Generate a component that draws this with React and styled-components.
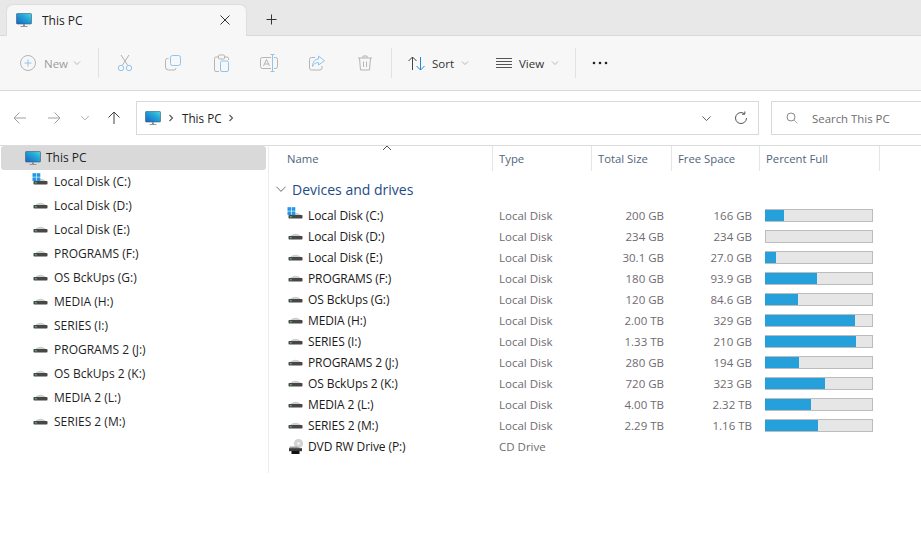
import React from 'react';
import styled, { createGlobalStyle } from 'styled-components';

const Global = createGlobalStyle`
  html, body { margin: 0; padding: 0; background: #fff; overflow: hidden; }
  body { font-family: "Open Sans", "Noto Sans", "Liberation Sans", sans-serif; font-size: 12px; color: #1a1a1a; }
  * { box-sizing: border-box; }
`;

const Window = styled.div`
  width: 921px; height: 540px; display: flex; flex-direction: column; overflow: hidden; background: #fff;
`;
const TabStrip = styled.div`
  height: 36px; flex: none; background: #e8e8e8; border-bottom: 1px solid #d9d9d9; display: flex; padding: 4px 0 0 6px;
`;
const Tab = styled.div`
  width: 241px; height: 32px; background: #f7f7f7; border: 1px solid #dedede; border-bottom: none; border-radius: 7px 7px 0 0;
  display: flex; align-items: center; padding: 0 16px 1px 9px; font-size: 12px; color: #222;
  span { margin-left: 10px; flex: 1; }
`;
const NewTab = styled.div`
  width: 48px; display: flex; align-items: center; justify-content: center;
`;
const Toolbar = styled.div`
  height: 55px; flex: none; background: #f7f7f7; border-bottom: 1px solid #d9d9d9; display: flex; align-items: center; padding: 0 0 0 12px; color: #9a9a9a;
`;
const ToolBtn = styled.div`
  width: ${p => p.$w}px; height: 30px; display: flex; align-items: center; flex: none; gap: ${p => p.$gap || 0}px;
  justify-content: ${p => p.$pad ? 'flex-start' : 'center'}; padding-left: ${p => p.$pad || 0}px;
  color: ${p => p.$dark ? '#333' : '#9c9c9c'}; font-size: 11.5px;
`;
const ToolSep = styled.div`
  width: 1px; height: 30px; background: #e2e2e2; flex: none; margin-left: ${p => p.$l || 0}px; margin-right: ${p => p.$r || 0}px;
`;
const NavRow = styled.div`
  height: 55px; flex: none; display: flex; align-items: center; border-bottom: 1px solid #dcdcdc;
`;
const NavBtns = styled.div`
  width: 136px; flex: none; display: flex; align-items: center; padding-left: 9px;
`;
const NavBtn = styled.div`
  width: ${p => p.$w}px; height: 24px; flex: none; display: flex; align-items: center; justify-content: center;
`;
const Address = styled.div`
  width: 623px; height: 34px; flex: none; border: 1px solid #d9d9d9; display: flex; align-items: center; padding: 0 10px 0 8px; font-size: 11.7px; color: #222;
`;
const CaretSlot = styled.span`margin-left: 7px; line-height: 0;`;
const Crumb = styled.span`margin: 0 6px 0 8px;`;
const Spacer = styled.div`flex: 1;`;
const DropSlot = styled.span`margin-right: 22px; line-height: 0;`;
const Search = styled.div`
  width: 160px; height: 34px; flex: none; margin-left: 12px; border: 1px solid #d9d9d9; border-right: none; display: flex; align-items: center; padding-left: 14px; gap: 14px; color: #6e6e6e; font-size: 11.4px;
`;
const Body = styled.div`display: flex; flex: 1; min-height: 0;`;
const Side = styled.div`
  width: 269px; height: 327px; flex: none; border-right: 1px solid #ececec; padding: 0 0 0 1px;
`;
const SideRow = styled.div`
  width: 265px; height: 24px; display: flex; align-items: center; font-size: 12px; color: #1f1f1f; border-radius: 3px;
  padding-left: ${p => p.$sel ? 24 : 32}px; padding-bottom: 1px; background: ${p => p.$sel ? '#d9d9d9' : 'transparent'};
  span { margin-left: ${p => p.$sel ? 5 : 6}px; }
`;
const Main = styled.div`flex: 1; min-width: 0; position: relative;`;
const SortMark = styled.div`position: absolute; left: 113px; top: -1px; line-height: 0;`;
const Columns = '223px 99px 80px 88px 121px';
const Head = styled.div`
  display: grid; grid-template-columns: ${Columns}; height: 25px; width: 611px;
`;
const HeadCell = styled.div`
  color: #51647c; font-size: 11.3px; display: flex; align-items: center; height: 25px; padding-left: ${p => p.$first ? 18 : 6}px;
  border-left: ${p => p.$first ? 'none' : '1px solid #e5e5e5'};
  border-right: ${p => p.$last ? '1px solid #e5e5e5' : 'none'};
`;
const Group = styled.div`
  height: 24px; margin-top: 6px; margin-bottom: 4px; display: flex; align-items: center; padding-left: 6px; gap: 5px; color: #1c4c86; font-size: 14px;
`;
const Row = styled.div`
  display: grid; grid-template-columns: ${Columns}; height: 21px; align-items: center; width: 611px; font-size: 11.5px;
`;
const NameCell = styled.div`
  display: flex; align-items: center; padding-left: 19px; gap: 5px; color: #1a1a1a; font-size: 12px; letter-spacing: -0.1px;
`;
const TypeCell = styled.div`padding-left: 7px; color: #6f6a72;`;
const SizeCell = styled.div`text-align: right; padding-right: 7px; color: #6f6a72;`;
const BarCell = styled.div`padding-left: 6px;`;
const Bar = styled.div`
  width: 108px; height: 13px; background: #e6e6e6; border: 1px solid #bcbcbc;
`;
const Fill = styled.div`height: 100%; background: #26a0da; margin-left: -1px;`;

const Monitor = () => (
  <svg width="16" height="16" viewBox="0 0 16 16" style={{ flex: 'none' }}>
    <defs>
      <linearGradient id="scr" x1="0" y1="1" x2="1" y2="0">
        <stop offset="0" stopColor="#1b62c4" />
        <stop offset="0.6" stopColor="#23a6d6" />
        <stop offset="1" stopColor="#4fd3dd" />
      </linearGradient>
    </defs>
    <rect x="0.5" y="1.5" width="15" height="10.5" rx="0.8" fill="url(#scr)" stroke="#3a5a70" strokeWidth="0.6" />
    <rect x="7" y="12.2" width="2" height="1.8" fill="#8a8f94" />
    <rect x="4.5" y="14" width="7" height="0.9" fill="#8a8f94" />
  </svg>
);
const Disk = ({ win }) => (
  <svg width="15" height="15" viewBox="0 0 15 15" style={{ flex: 'none', overflow: 'visible' }}>
    <path d="M2 7 Q7.500 2.600 13 7 L14.200 8 H0.800 Z" fill="#cfcfcf" />
    <rect x="0.500" y="7" width="14" height="3.600" rx="0.800" fill="#474747" />
    <rect x="2" y="8.300" width="1.700" height="1" fill="#5fe05f" />
    {win && <g fill="#2197e6"><rect x="-0.500" y="-0.800" width="3.600" height="3.600" /><rect x="3.700" y="-0.800" width="3.600" height="3.600" /><rect x="-0.500" y="3.400" width="3.600" height="3.600" /><rect x="3.700" y="3.400" width="3.600" height="3.600" /></g>}
  </svg>
);
const Dvd = () => (
  <svg width="15" height="16" viewBox="0 0 15 16" style={{ flex: 'none' }}>
    <circle cx="10.500" cy="4.500" r="4.300" fill="#d4d4d4" stroke="#b5b5b5" strokeWidth="0.400" />
    <circle cx="10.500" cy="4.500" r="1.200" fill="#f5f5f5" />
    <path d="M2 7.500 H9 L13 9.500 H1 Z" fill="#9a9a9a" />
    <rect x="1" y="9.200" width="13" height="3" fill="#3a3a3a" />
    <rect x="3.500" y="12" width="8" height="3" fill="#111" />
  </svg>
);
const Chevron = ({ c = '#9a9a9a', w = 8 }) => (
  <svg width={w} height={w} viewBox="0 0 8 8" style={{ flex: 'none' }}><path d="M1 2.500 L4 5.500 L7 2.500" fill="none" stroke={c} strokeWidth="0.700" /></svg>
);
const Caret = () => (
  <svg width="6" height="8" viewBox="0 0 6 8"><path d="M1.500 1 L4.500 4 L1.500 7" fill="none" stroke="#555" strokeWidth="1.100" /></svg>
);
const I = ({ w = 18, h = 18, children }) => (
  <svg width={w} height={h} viewBox={`0 0 ${w} ${h}`} fill="none" strokeWidth="1" style={{ flex: 'none' }}>{children}</svg>
);

const drives = [
  ['Local Disk (C:)', '200 GB', '166 GB', 19, true],
  ['Local Disk (D:)', '234 GB', '234 GB', 0],
  ['Local Disk (E:)', '30.1 GB', '27.0 GB', 11],
  ['PROGRAMS (F:)', '180 GB', '93.9 GB', 52],
  ['OS BckUps (G:)', '120 GB', '84.6 GB', 33],
  ['MEDIA (H:)', '2.00 TB', '329 GB', 90],
  ['SERIES (I:)', '1.33 TB', '210 GB', 91],
  ['PROGRAMS 2 (J:)', '280 GB', '194 GB', 34],
  ['OS BckUps 2 (K:)', '720 GB', '323 GB', 60],
  ['MEDIA 2 (L:)', '4.00 TB', '2.32 TB', 46],
  ['SERIES 2 (M:)', '2.29 TB', '1.16 TB', 53],
];

export default function App() {
  return (
    <Window>
      <Global />
      <TabStrip>
        <Tab>
          <Monitor />
          <span>This PC</span>
          <I w={10} h={10}><path d="M0.500 0.500 L9.500 9.500 M9.500 0.500 L0.500 9.500" stroke="#333" /></I>
        </Tab>
        <NewTab><I w={11} h={11}><path d="M5.500 0.500 V10.500 M0.500 5.500 H10.500" stroke="#333" /></I></NewTab>
      </TabStrip>
      <Toolbar>
        <ToolBtn $w={86} $gap={5} $pad={7}>
          <I w={18} h={18}><circle cx="9" cy="9" r="7.500" stroke="#b5b5b5" /><path d="M9 5.500 V12.500 M5.500 9 H12.500" stroke="#8fc4ee" /></I>
          <span style={{ marginLeft: 2 }}>New</span>
          <Chevron />
        </ToolBtn>
        <ToolSep $r={2} />
        <ToolBtn $w={48}>
          <I w={16} h={18}><path d="M4 1 L10.500 11 M12 1 L5.500 11" stroke="#b0b0b0" /><circle cx="4" cy="14" r="2.700" stroke="#8fc4ee" /><circle cx="12" cy="14" r="2.700" stroke="#8fc4ee" /></I>
        </ToolBtn>
        <ToolBtn $w={48}>
          <I w={16} h={16}><rect x="5.500" y="0.500" width="10" height="10" rx="2" stroke="#8fc4ee" /><path d="M3.500 3.500 H2.500 A2 2 0 0 0 0.500 5.500 V12 A3 3 0 0 0 3.500 15 H9 A2 2 0 0 0 11 13" stroke="#b5b5b5" /></I>
        </ToolBtn>
        <ToolBtn $w={48}>
          <I w={15} h={18}><path d="M4.500 3 H2 A1.500 1.500 0 0 0 0.500 4.500 V16 A1.500 1.500 0 0 0 2 17.500 H5 M10.500 3 H13 A1.500 1.500 0 0 1 14.500 4.500 V6" stroke="#b5b5b5" /><rect x="4.500" y="1" width="6" height="4" rx="1" stroke="#b5b5b5" /><rect x="6.500" y="7" width="8" height="10.500" rx="1.500" stroke="#8fc4ee" /></I>
        </ToolBtn>
        <ToolBtn $w={48}>
          <I w={18} h={18}><path d="M11 3.500 H2.500 A2 2 0 0 0 0.500 5.500 V12.500 A2 2 0 0 0 2.500 14.500 H11 M14 3.500 H15.500 A2 2 0 0 1 17.500 5.500 V12.500 A2 2 0 0 1 15.500 14.500 H14" stroke="#b5b5b5" /><path d="M12.500 1 V17 M10.500 0.500 H14.500 M10.500 17.500 H14.500" stroke="#8fc4ee" /><path d="M3.500 12 L6.500 5.500 L9.500 12 M4.500 10 H8.500" stroke="#b5b5b5" /></I>
        </ToolBtn>
        <ToolBtn $w={48}>
          <I w={16} h={16}><path d="M6 2.500 H2.500 A2 2 0 0 0 0.500 4.500 V13 A2 2 0 0 0 2.500 15 H11 A2 2 0 0 0 13 13 V11" stroke="#b5b5b5" /><path d="M9.500 1 L15.500 5.800 L9.500 10 V7.500 C6.500 7.500 4.500 9 3.500 11.500 C3.500 7 6 4 9.500 4 Z" stroke="#8fc4ee" /></I>
        </ToolBtn>
        <ToolBtn $w={48}>
          <I w={14} h={16}><path d="M0 3 H14 M5 3 V1 H9 V3 M1.500 3 L2.500 15 H11.500 L12.500 3 M5.500 6.500 V12 M8.500 6.500 V12" stroke="#b5b5b5" /></I>
        </ToolBtn>
        <ToolSep $l={2} />
        <ToolBtn $w={88} $gap={7} $pad={16} $dark>
          <I w={17} h={15}><path d="M4.500 14 V1 M0.500 5 L4.500 1 L8.500 5" stroke="#444" /><path d="M12.500 1 V14 M8.500 10 L12.500 14 L16.500 10" stroke="#1e88d8" /></I>
          <span>Sort</span>
          <Chevron />
        </ToolBtn>
        <ToolBtn $w={95} $gap={7} $pad={16} $dark>
          <I w={16} h={12}><path d="M0 1.500 H16 M0 4.500 H16 M0 7.500 H16 M0 10.500 H16" stroke="#555" /></I>
          <span>View</span>
          <Chevron />
        </ToolBtn>
        <ToolSep />
        <ToolBtn $w={48}>
          <I w={16} h={4}><circle cx="2" cy="2" r="1.300" fill="#222" /><circle cx="8" cy="2" r="1.300" fill="#222" /><circle cx="14" cy="2" r="1.300" fill="#222" /></I>
        </ToolBtn>
      </Toolbar>
      <NavRow>
        <NavBtns>
          <NavBtn $w={22}><I w={14} h={14}><path d="M13 7 H1 M6.500 1.500 L1 7 L6.500 12.500" stroke="#a0a0a0" /></I></NavBtn>
          <NavBtn $w={46}><I w={14} h={14}><path d="M1 7 H13 M7.500 1.500 L13 7 L7.500 12.500" stroke="#a0a0a0" /></I></NavBtn>
          <NavBtn $w={16}><Chevron w={10} c="#a0a0a0" /></NavBtn>
          <NavBtn $w={42}><I w={14} h={14}><path d="M7 13 V1 M1.500 6.500 L7 1 L12.500 6.500" stroke="#444" /></I></NavBtn>
        </NavBtns>
        <Address>
          <Monitor />
          <CaretSlot><Caret /></CaretSlot>
          <Crumb>This PC</Crumb>
          <Caret />
          <Spacer />
          <DropSlot><Chevron w={11} c="#555" /></DropSlot>
          <I w={14} h={14}><path d="M12.500 7 A5.500 5.500 0 1 1 10.500 2.800 M10.800 0.500 V3.200 H8" stroke="#555" /></I>
        </Address>
        <Search>
          <I w={12} h={12}><circle cx="5" cy="5" r="4" stroke="#8a8a8a" /><path d="M8 8 L11.500 11.500" stroke="#8fb8d8" /></I>
          <span>Search This PC</span>
        </Search>
      </NavRow>
      <Body>
        <Side>
          <SideRow $sel><Monitor /><span>This PC</span></SideRow>
          {drives.map(d => (
            <SideRow key={d[0]}><Disk win={d[4]} /><span>{d[0]}</span></SideRow>
          ))}
        </Side>
        <Main>
          <SortMark><svg width="10" height="6" viewBox="0 0 10 6"><path d="M1 5 L5 1 L9 5" fill="none" stroke="#555" /></svg></SortMark>
          <Head>
            <HeadCell $first>Name</HeadCell>
            <HeadCell>Type</HeadCell>
            <HeadCell>Total Size</HeadCell>
            <HeadCell>Free Space</HeadCell>
            <HeadCell $last>Percent Full</HeadCell>
          </Head>
          <Group><Chevron w={12} c="#8a8a8a" /><span>Devices and drives</span></Group>
          {drives.map(d => (
            <Row key={d[0]}>
              <NameCell><Disk win={d[4]} />{d[0]}</NameCell>
              <TypeCell>Local Disk</TypeCell>
              <SizeCell>{d[1]}</SizeCell>
              <SizeCell>{d[2]}</SizeCell>
              <BarCell><Bar><Fill style={{ width: d[3] }} /></Bar></BarCell>
            </Row>
          ))}
          <Row>
            <NameCell><Dvd />DVD RW Drive (P:)</NameCell>
            <TypeCell>CD Drive</TypeCell>
          </Row>
        </Main>
      </Body>
    </Window>
  );
}
